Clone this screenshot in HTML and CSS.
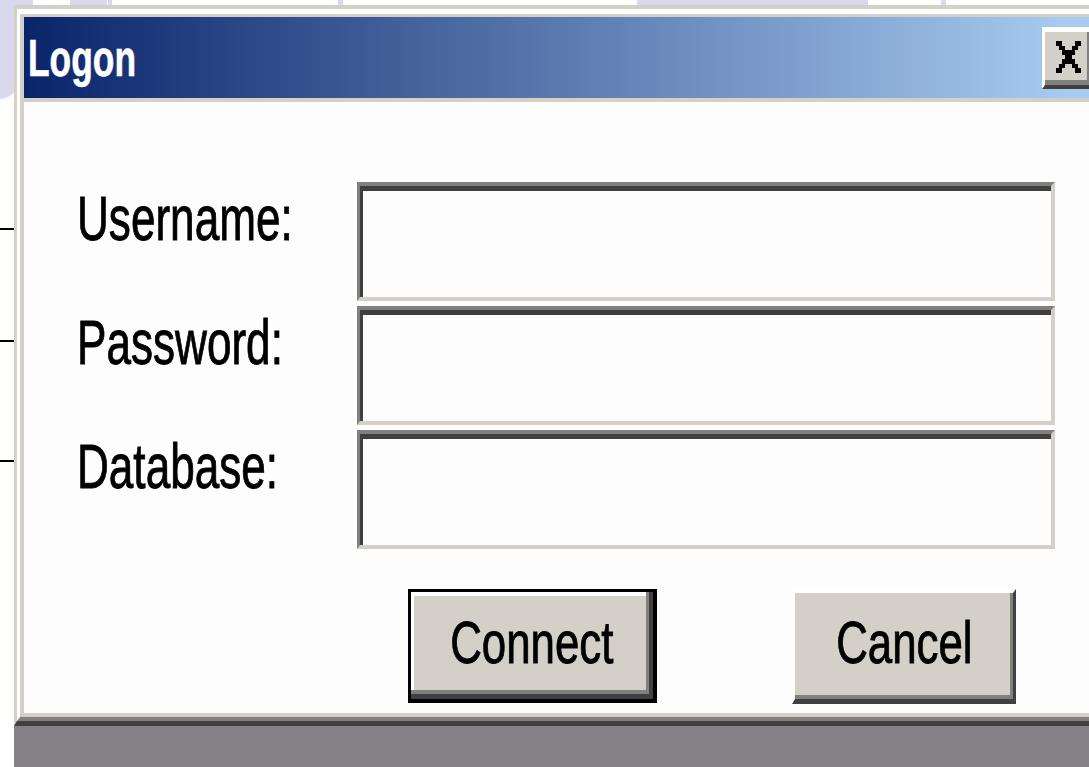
FILE: index.html
```html
<!DOCTYPE html>
<html lang="en">
<head>
<meta charset="utf-8">
<title>Logon</title>
<link rel="stylesheet" href="styles.css">
</head>
<body>
<div class="desk">
  <div class="gutter"></div>
  <div class="stack">
    <div class="dialog">
      <div class="frame">
        <div class="titlebar">
          <span class="title">Logon</span>
          <button class="close" type="button" aria-label="Close">
            <svg class="close-glyph" width="25" height="32" viewBox="0 0 8 7" preserveAspectRatio="none" shape-rendering="crispEdges">
              <path d="M0 0h2v1H0zM6 0h2v1H6zM1 1h2v1H1zM5 1h2v1H5zM2 2h4v1H2zM3 3h2v1H3zM2 4h4v1H2zM1 5h2v1H1zM5 5h2v1H5zM0 6h2v1H0zM6 6h2v1H6z" fill="#000"/>
            </svg>
          </button>
        </div>
        <div class="client">
          <form class="fields" onsubmit="return false">
            <label class="label" for="user"><span>Username:</span></label>
            <input class="field" id="user" type="text">
            <label class="label" for="pass"><span>Password:</span></label>
            <input class="field" id="pass" type="password">
            <label class="label" for="db"><span>Database:</span></label>
            <input class="field" id="db" type="text">
          </form>
          <div class="actions">
            <button class="btn btn-default" type="button"><span>Connect</span></button>
            <button class="btn btn-cancel" type="button"><span>Cancel</span></button>
          </div>
        </div>
      </div>
    </div>
    <div class="under"></div>
  </div>
</div>
</body>
</html>
```

FILE: styles.css
```css
html, body {
  margin: 0;
  padding: 0;
  background: #ffffff;
}

/* backdrop: slide strip along the top, lavender blob, tick marks on the left */
.desk {
  --lav: #d9d8ec;
  display: flex;
  width: 1089px;
  height: 767px;
  overflow: hidden;
  background:
    linear-gradient(to right,
      var(--lav) 0 33px, #fff 33px 70px, var(--lav) 70px 107px, #fff 107px 108px,
      var(--lav) 108px 112px, #fff 112px 338px, var(--lav) 338px 343px, #fff 343px 637px,
      var(--lav) 637px 868px, #fff 868px 941px, var(--lav) 941px 946px, #fff 946px) 0 0 / 100% 5px no-repeat,
    linear-gradient(#000, #000) 0 228px / 14px 2px no-repeat,
    linear-gradient(#000, #000) 0 340px / 14px 2px no-repeat,
    linear-gradient(#000, #000) 0 460px / 14px 2px no-repeat,
    radial-gradient(ellipse 40px 100px at 0 0, var(--lav) 98%, transparent 100%) 0 0 / 60px 120px no-repeat,
    #fff;
  font-family: "Liberation Sans", Arial, sans-serif;
}

.gutter {
  flex: none;
  width: 14px;
}

.stack {
  flex: none;
  width: 1090px;
  margin-top: 5px;
  display: flex;
  flex-direction: column;
}

/* window frame: outer face line, white highlight, face padding */
.dialog {
  border-top: 4px solid #d4d0c8;
  border-left: 3px solid #d4d0c8;
  border-bottom: 5px solid #404040;
}

.frame {
  background: #d4d0c8;
  border-top: 5px solid #ffffff;
  border-left: 3px solid #ffffff;
  border-bottom: 4px solid #808080;
  padding: 3px 0 4px 4px;
}

.titlebar {
  height: 81px;
  display: flex;
  align-items: center;
  justify-content: space-between;
  padding-left: 4px;
  background: linear-gradient(to right, #0a246a 0, #a6caf0 1040px);
}

.title {
  display: inline-block;
  color: #ffffff;
  font: bold 52px/1 "Liberation Sans", Arial, sans-serif;
  -webkit-text-stroke: 0.6px #ffffff;
  transform: scaleX(0.68);
  transform-origin: 0 50%;
}

.close {
  flex: none;
  box-sizing: border-box;
  width: 52px;
  height: 62px;
  margin: 0 10px 0 0;
  padding: 0;
  display: flex;
  align-items: center;
  justify-content: center;
  background: #d4d0c8;
  border-style: solid;
  border-width: 5px 4px 4px 3px;
  border-color: #ffffff #404040 #404040 #ffffff;
  box-shadow: inset -3px -5px 0 #808080;
}

.close-glyph {
  display: block;
  margin: -2px 0 0 2px;
}

.client {
  height: 611px;
  margin-top: 4px;
  background: #fdfdfd;
  padding-top: 80px;
  box-sizing: border-box;
}

.fields {
  margin: 0 0 0 53px;
  display: grid;
  grid-template-columns: 280px 698px;
  grid-auto-rows: 119px;
  row-gap: 5px;
}

.label {
  padding-top: 5px;
  color: #000;
}

.label span {
  display: inline-block;
  font: 63px/1 "Liberation Sans", Arial, sans-serif;
  -webkit-text-stroke: 0.9px #000;
  transform: scaleX(0.7);
  transform-origin: 0 0;
  white-space: nowrap;
}

/* sunken edit box */
.field {
  box-sizing: border-box;
  width: 698px;
  height: 119px;
  margin: 0;
  padding: 0;
  background: #fdfdfd;
  border-style: solid;
  border-width: 4px 4px 4px 3px;
  border-color: #808080 #d4d0c8 #d4d0c8 #808080;
  box-shadow: inset 3px 5px 0 #404040;
  outline: none;
}

.actions {
  display: flex;
  gap: 135px;
  margin-top: 40px;
  padding-left: 384px;
}

/* raised push buttons */
.btn {
  box-sizing: border-box;
  height: 115px;
  margin: 0;
  padding: 0 0 6px;
  display: flex;
  align-items: center;
  justify-content: center;
  background: #d4d0c8;
  color: #000;
  font: 60px/1 "Liberation Sans", Arial, sans-serif;
}

.btn span {
  display: inline-block;
  -webkit-text-stroke: 0.9px #000;
  transform: scaleX(0.73);
  white-space: nowrap;
}

.btn-default {
  width: 249px;
  height: 114px;
  border-style: solid;
  border-width: 3px 4px 4px 3px;
  border-color: #000;
  box-shadow:
    inset -4px -5px 0 #404040,
    inset -7px -9px 0 #808080,
    inset 3px 4px 0 #ffffff;
}

.btn-cancel {
  width: 224px;
  border-style: solid;
  border-width: 4px 3px 5px 3px;
  border-color: #ffffff #404040 #404040 #ffffff;
  box-shadow: inset -3px -4px 0 #808080;
}

.under {
  flex: 1;
  background: #848287;
}
```
